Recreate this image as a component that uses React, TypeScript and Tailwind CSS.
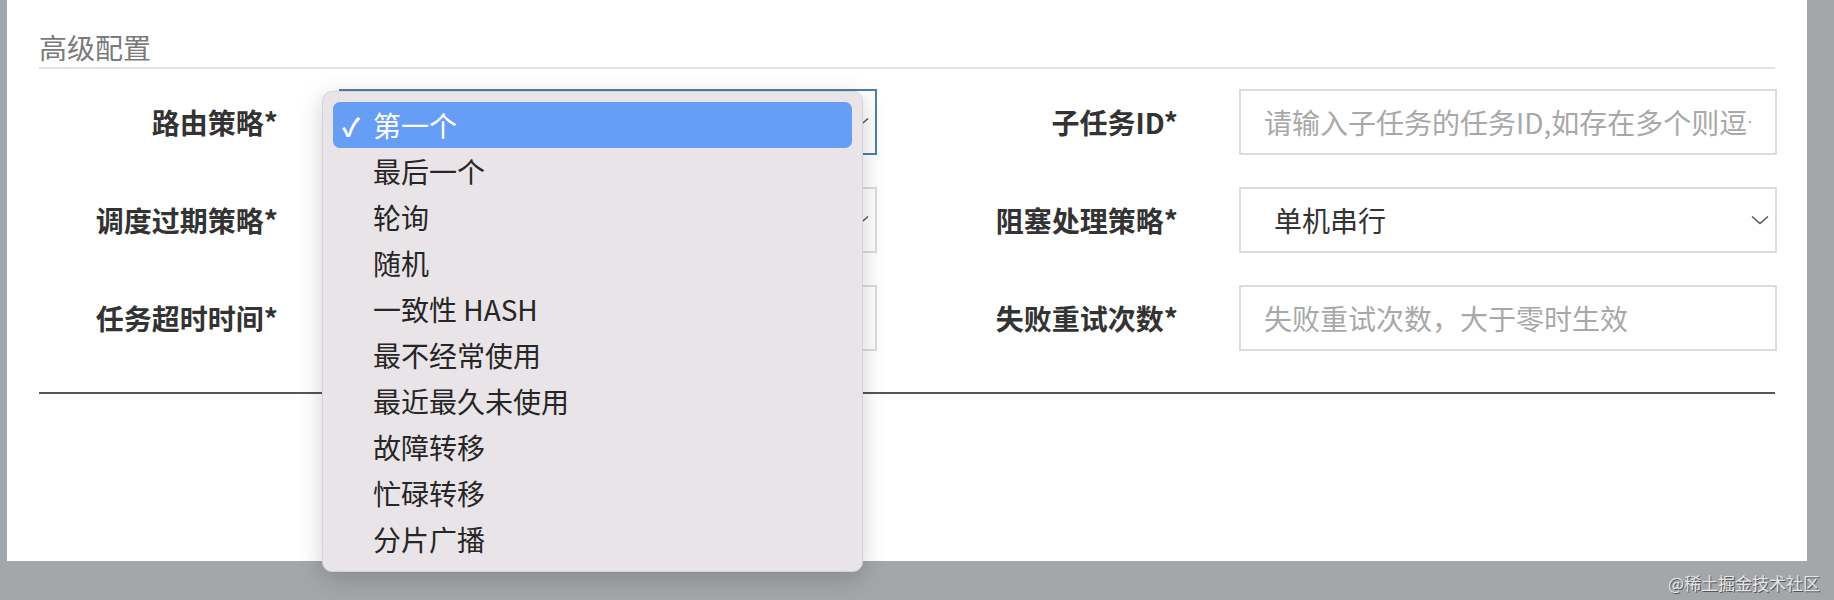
import { useState } from 'react';

const font = "font-['Noto_Sans_CJK_SC','Noto_Sans',sans-serif]";

const routeOptions = [
  '第一个',
  '最后一个',
  '轮询',
  '随机',
  '一致性 HASH',
  '最不经常使用',
  '最近最久未使用',
  '故障转移',
  '忙碌转移',
  '分片广播',
];

function Chevron() {
  return (
    <svg width="18" height="10" viewBox="0 0 18 10" className="shrink-0">
      <path d="M1 1.5 L9 8.5 L17 1.5" fill="none" stroke="#555" strokeWidth="1.5" />
    </svg>
  );
}

function Field({ label, children }: { label: string; children: React.ReactNode }) {
  return (
    <div className="flex items-center">
      <div className="w-[239px] text-right text-[28px] font-bold text-[#333] leading-none">{label}</div>
      <div className="ml-[61px] w-[538px] h-[66px]">{children}</div>
    </div>
  );
}

function Select({ value, focused }: { value: string; focused?: boolean }) {
  return (
    <div
      className={`h-full flex items-center justify-between pl-[33px] pr-[6px] border-2 text-[28px] text-[#333] ${
        focused ? 'border-[#4f7fa8]' : 'border-[#dcdcdc]'
      }`}
    >
      <span>{value}</span>
      <Chevron />
    </div>
  );
}

function TextInput({ placeholder }: { placeholder: string }) {
  return (
    <input
      placeholder={placeholder}
      className="w-full h-full border-2 border-[#dcdcdc] pl-[23px] pr-[24px] text-[28px] text-[#333] placeholder:text-[#a8a8a8] outline-none"
    />
  );
}

export default function App() {
  const [selected] = useState(0);

  return (
    <div className={`relative w-[1834px] h-[600px] bg-[#a3a7aa] overflow-hidden ${font}`}>
      {/* form panel */}
      <div className="ml-[7px] w-[1800px] h-[561px] bg-white px-[32px] pt-[29px]">
        <div className="h-[40px] border-b-2 border-[#e3e3e3] text-[28px] leading-[36px] text-[#7a7a7a]">高级配置</div>

        <div className="mt-[20px] grid grid-cols-[838px_838px] gap-x-[62px] gap-y-[32px]">
          <Field label="路由策略*">
            <Select value="第一个" focused />
          </Field>
          <Field label="子任务ID*">
            <TextInput placeholder="请输入子任务的任务ID,如存在多个则逗号分隔" />
          </Field>
          <Field label="调度过期策略*">
            <Select value="忽略" />
          </Field>
          <Field label="阻塞处理策略*">
            <Select value="单机串行" />
          </Field>
          <Field label="任务超时时间*">
            <TextInput placeholder="任务超时时间，单位秒，大于零时生效" />
          </Field>
          <Field label="失败重试次数*">
            <TextInput placeholder="失败重试次数，大于零时生效" />
          </Field>
        </div>

        <div className="mt-[41px] h-[2px] bg-[#555]" />
      </div>

      {/* native select popup */}
      <div className="absolute left-[322px] top-[91px] w-[541px] h-[481px] rounded-[10px] bg-[#e9e4e8] border border-[#d6d1d5] shadow-[0_6px_24px_rgba(0,0,0,0.18)] pt-[10px] px-[10px]">
        {routeOptions.map((opt, i) => (
          <div
            key={opt}
            className={`flex items-center h-[46px] rounded-[7px] text-[28px] leading-none ${
              i === selected ? 'bg-[#679ef5] text-white' : 'text-[#262626]'
            }`}
          >
            <span className="w-[40px] pl-[9px] text-[25px] font-bold">{i === selected ? '✓' : ''}</span>
            <span>{opt}</span>
          </div>
        ))}
      </div>

      {/* watermark */}
      <div className="absolute left-[1668px] top-[570px] text-[17px] text-[#e6e6e6] [text-shadow:1px_1px_0_#555] whitespace-nowrap">
        @稀土掘金技术社区
      </div>
    </div>
  );
}
